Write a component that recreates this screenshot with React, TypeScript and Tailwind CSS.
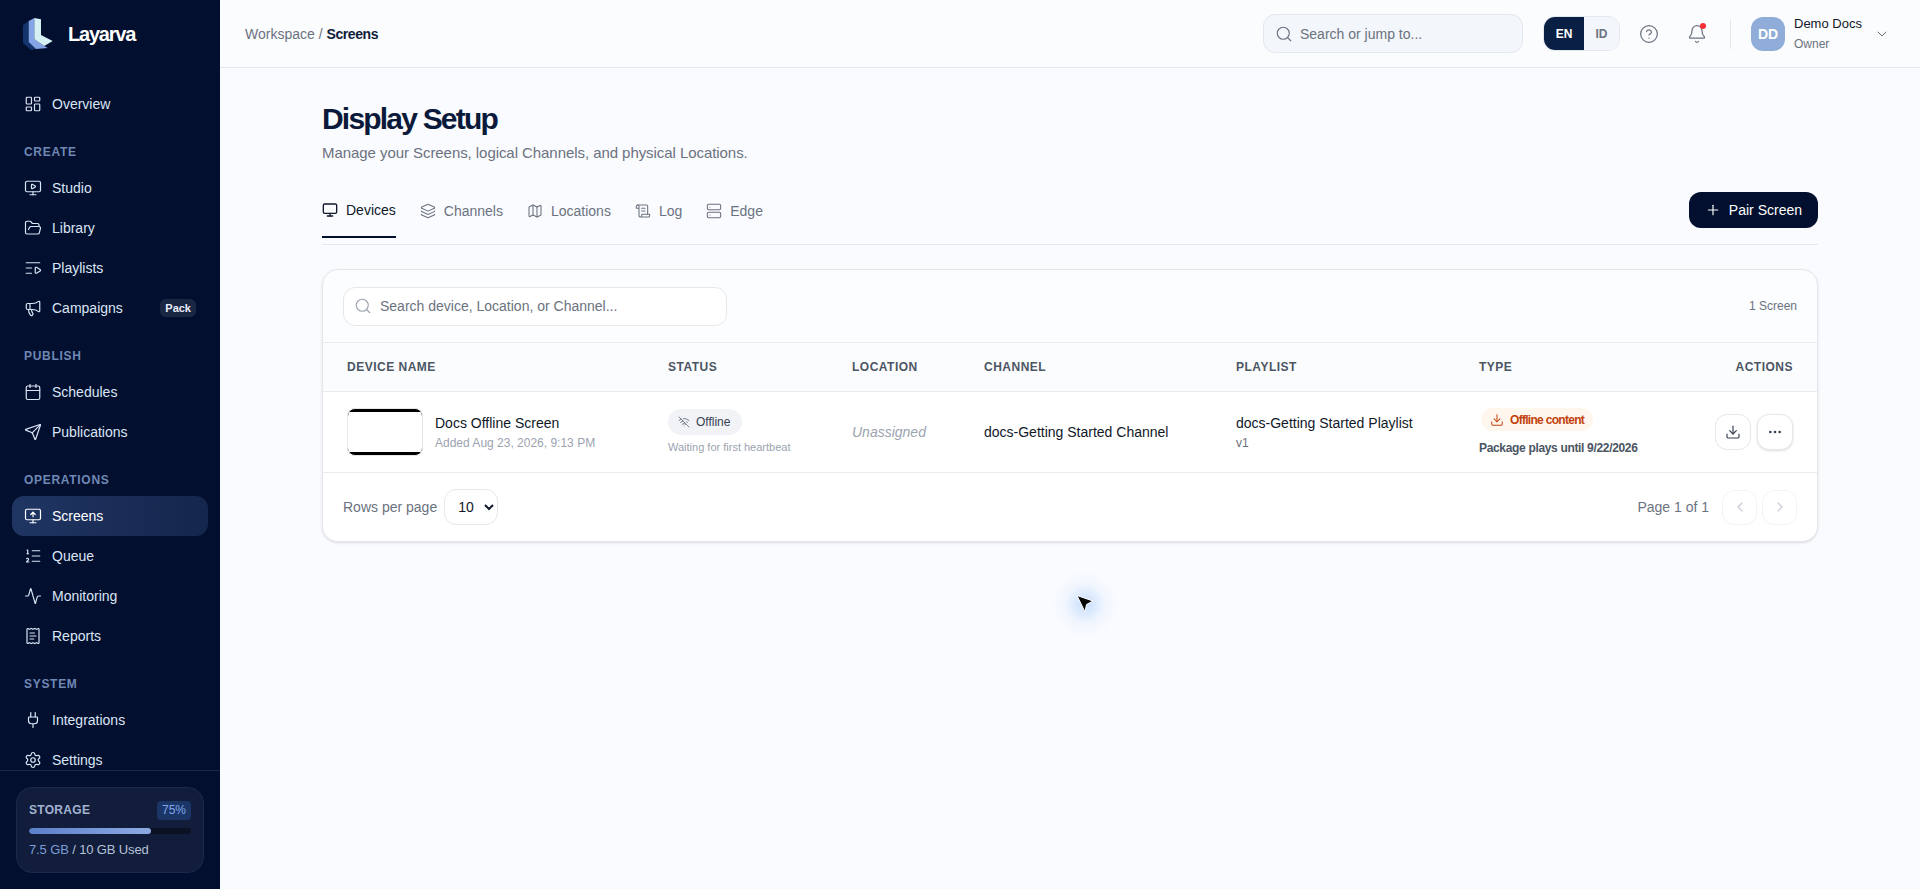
import {
  Activity,
  Bell,
  Calendar,
  ChevronDown,
  ChevronLeft,
  ChevronRight,
  CircleHelp,
  Download,
  Ellipsis,
  FolderOpen,
  Layers,
  LayoutDashboard,
  ListOrdered,
  ListVideo,
  Map,
  Megaphone,
  Monitor,
  MonitorPlay,
  MonitorUp,
  Plug,
  Plus,
  ReceiptText,
  ScrollText,
  Search,
  Send,
  Server,
  Settings,
  WifiOff,
  type LucideIcon,
} from "lucide-react";

interface NavEntry {
  label: string;
  icon: LucideIcon;
  active?: boolean;
  badge?: string;
}

const navSections: { title?: string; items: NavEntry[] }[] = [
  { items: [{ label: "Overview", icon: LayoutDashboard }] },
  {
    title: "CREATE",
    items: [
      { label: "Studio", icon: MonitorPlay },
      { label: "Library", icon: FolderOpen },
      { label: "Playlists", icon: ListVideo },
      { label: "Campaigns", icon: Megaphone, badge: "Pack" },
    ],
  },
  {
    title: "PUBLISH",
    items: [
      { label: "Schedules", icon: Calendar },
      { label: "Publications", icon: Send },
    ],
  },
  {
    title: "OPERATIONS",
    items: [
      { label: "Screens", icon: MonitorUp, active: true },
      { label: "Queue", icon: ListOrdered },
      { label: "Monitoring", icon: Activity },
      { label: "Reports", icon: ReceiptText },
    ],
  },
  {
    title: "SYSTEM",
    items: [
      { label: "Integrations", icon: Plug },
      { label: "Settings", icon: Settings },
    ],
  },
];

const tabs: { label: string; icon: LucideIcon; active?: boolean }[] = [
  { label: "Devices", icon: Monitor, active: true },
  { label: "Channels", icon: Layers },
  { label: "Locations", icon: Map },
  { label: "Log", icon: ScrollText },
  { label: "Edge", icon: Server },
];

function Logo() {
  return (
    <svg width="32" height="32" viewBox="0 0 32 32" className="shrink-0">
      <path d="M1 7 L6.7 3 L6.7 24 L14 31 L9 32 L1 25 Z" fill="#12336b" />
      <path d="M6.7 3 L12.3 0 L12.3 21.3 L22.3 28 L25.7 30 L14 31 L6.7 24 Z" fill="#86a5e6" />
      <path d="M12.3 0 L19 1.3 L19 17 L30.7 23 L22.3 28 L12.3 21.3 Z" fill="#d6f1f3" />
    </svg>
  );
}

function Sidebar() {
  return (
    <aside className="flex h-full w-[220px] shrink-0 flex-col bg-[#020f2e]">
      <div className="flex h-[68px] shrink-0 items-center gap-[14px] pb-[1px] pl-[22px]">
        <Logo />
        <span className="text-xl font-bold tracking-[-1.2px] text-white">Layarva</span>
      </div>
      <nav className="min-h-0 flex-1 overflow-hidden px-3 pt-4">
        {navSections.map((section, i) => (
          <div key={i}>
            {section.title && (
              <div className="mt-5 mb-2 pl-3 text-xs leading-4 font-bold tracking-[0.7px] text-[#7088b5]">
                {section.title}
              </div>
            )}
            {section.items.map((item) => (
              <div
                key={item.label}
                className={`flex h-10 items-center gap-[10px] rounded-xl px-3 text-sm ${
                  item.active
                    ? "bg-gradient-to-r from-[#1f3563] to-[#15264c] text-white"
                    : "text-[#dbe5f5]"
                }`}
              >
                <item.icon size={18} strokeWidth={1.6} className="shrink-0" />
                <span>{item.label}</span>
                {item.badge && (
                  <span className="ml-auto rounded-md bg-[#1b2643] px-[5px] py-[2px] text-[11px] leading-[14px] font-bold text-[#e8edf7]">
                    {item.badge}
                  </span>
                )}
              </div>
            ))}
          </div>
        ))}
      </nav>
      <div className="shrink-0 border-t border-[#1b2947] p-4">
        <div className="h-[86px] rounded-2xl border border-[#1b2a4c] bg-[#111d3b] px-3 pt-3">
          <div className="flex h-[20px] items-center justify-between">
            <span className="text-xs font-bold tracking-wide text-[#a4b3d1]">STORAGE</span>
            <span className="rounded bg-[#1b3566] px-[5px] text-xs leading-[19px] text-[#7fa8ec]">75%</span>
          </div>
          <div className="mt-2 h-[6px] overflow-hidden rounded-full bg-[#0b1122]">
            <div className="h-full w-3/4 rounded-full bg-gradient-to-r from-[#5c7fca] to-[#8eaae2]" />
          </div>
          <div className="mt-[6px] text-[13px] leading-5 tracking-[-0.13px] text-[#b5c1d9]">
            <span className="text-[#7d9cd6]">7.5 GB</span> / 10 GB Used
          </div>
        </div>
      </div>
    </aside>
  );
}

function TopBar() {
  return (
    <header className="flex h-[68px] shrink-0 items-center justify-between border-b border-[#e3e7ee] bg-[#fbfcfe] pr-[30px] pl-[25px]">
      <div className="text-sm text-[#6b7280]">
        Workspace / <span className="font-semibold tracking-[-0.4px] text-[#0f1d3a]">Screens</span>
      </div>
      <div className="flex items-center">
        <div className="flex h-[39px] w-[260px] items-center gap-[7px] rounded-xl border border-[#e2e8f0] bg-[#f3f6fa] pl-[11px] text-sm text-[#6b7280]">
          <Search size={18} strokeWidth={1.5} />
          <span>Search or jump to...</span>
        </div>
        <div className="ml-5 flex h-[35px] w-[77px] overflow-hidden rounded-xl border border-[#e2e8f0] text-xs font-bold">
          <span className="flex w-[40px] items-center justify-center bg-[#0a1f44] text-white">EN</span>
          <span className="flex flex-1 items-center justify-center bg-[#f3f6fa] text-[#6b7280]">ID</span>
        </div>
        <CircleHelp size={20} strokeWidth={1.5} className="ml-[19px] text-[#6b7280]" />
        <div className="relative ml-[28px]">
          <Bell size={20} strokeWidth={1.5} className="text-[#6b7280]" />
          <span className="absolute top-[-1px] right-[1px] h-[6px] w-[6px] rounded-full bg-red-500" />
        </div>
        <div className="mr-[20px] ml-[23px] h-[30px] w-px bg-[#e3e7ee]" />
        <div className="flex h-[34px] w-[34px] items-center justify-center rounded-xl bg-[#8fadd8] text-sm font-bold text-white">
          DD
        </div>
        <div className="ml-[9px] w-[80px]">
          <div className="text-[13px] leading-5 text-[#111827]">Demo Docs</div>
          <div className="text-xs leading-5 font-medium text-[#6b7280]">Owner</div>
        </div>
        <ChevronDown size={16} strokeWidth={1.5} className="text-[#6b7280]" />
      </div>
    </header>
  );
}

function ScreensTable() {
  return (
    <table className="w-full table-fixed border-collapse text-left">
      <thead>
        <tr className="h-[49px] border-y border-[#e8ebf0] bg-[#fbfcfe] text-xs font-bold tracking-[0.5px] text-[#4b5563]">
          <th className="w-[321px] pl-6 font-bold">DEVICE NAME</th>
          <th className="w-[184px] pl-6 font-bold">STATUS</th>
          <th className="w-[132px] pl-6 font-bold">LOCATION</th>
          <th className="w-[252px] pl-6 font-bold">CHANNEL</th>
          <th className="w-[243px] pl-6 font-bold">PLAYLIST</th>
          <th className="w-[180px] pl-6 font-bold">TYPE</th>
          <th className="pr-6 text-right font-bold">ACTIONS</th>
        </tr>
      </thead>
      <tbody>
        <tr className="h-[81px] border-b border-[#e8ebf0] bg-white">
          <td className="pl-6">
            <div className="flex items-center gap-3">
              <div className="h-12 w-[76px] shrink-0 overflow-hidden rounded-lg border border-[#e5e7eb] bg-black py-[3px]">
                <div className="h-full bg-white" />
              </div>
              <div className="pt-[2px]">
                <div className="text-sm leading-5 text-[#111827]">Docs Offline Screen</div>
                <div className="text-xs leading-5 text-[#9ca3af]">Added Aug 23, 2026, 9:13 PM</div>
              </div>
            </div>
          </td>
          <td className="pt-[2px] pl-6">
            <div className="inline-flex h-[26px] items-center gap-[6px] rounded-full bg-[#f1f3f6] pr-3 pl-[10px] text-xs text-[#374151]">
              <WifiOff size={12} strokeWidth={1.75} className="text-[#6b7280]" />
              Offline
            </div>
            <div className="mt-[2px] text-[11px] leading-[20px] font-medium text-[#9ca3af]">Waiting for first heartbeat</div>
          </td>
          <td className="pl-6 text-sm text-[#9ca3af] italic">Unassigned</td>
          <td className="pl-6 text-sm text-[#111827]">docs-Getting Started Channel</td>
          <td className="pt-[2px] pl-6">
            <div className="text-sm leading-5 text-[#111827]">docs-Getting Started Playlist</div>
            <div className="text-xs leading-5 text-[#6b7280]">v1</div>
          </td>
          <td className="pt-[2px] pl-6">
            <div className="ml-[2px] inline-flex h-[23px] items-center gap-[6px] rounded-full bg-[#fff7ed] px-[9px] text-xs font-bold tracking-[-0.7px] text-[#c2410c]">
              <Download size={14} strokeWidth={1.75} />
              Offline content
            </div>
            <div className="mt-[4px] whitespace-nowrap text-xs leading-[20px] font-semibold tracking-[-0.33px] text-[#4b5563]">Package plays until 9/22/2026</div>
          </td>
          <td className="pr-6">
            <div className="flex justify-end gap-[6px]">
              <button className="flex h-9 w-9 items-center justify-center rounded-xl border border-[#e5e7eb] bg-white text-[#374151]">
                <Download size={16} strokeWidth={1.75} />
              </button>
              <button className="flex h-9 w-9 items-center justify-center rounded-xl border border-[#e5e7eb] bg-white text-[#374151] shadow-sm">
                <Ellipsis size={16} strokeWidth={2} />
              </button>
            </div>
          </td>
        </tr>
      </tbody>
    </table>
  );
}

export default function App() {
  return (
    <div className="flex h-screen overflow-hidden bg-[#fafbfe] font-['Liberation_Sans',Arial,sans-serif]">
      <Sidebar />
      <div className="flex min-w-0 flex-1 flex-col">
        <TopBar />
        <main className="mx-auto w-[1496px] flex-1">
          <h1 className="mt-[33px] text-3xl font-bold tracking-[-1.8px] text-[#0b1a3a]">Display Setup</h1>
          <p className="mt-[6px] text-[15px] leading-5 tracking-[-0.06px] text-[#6b7280]">
            Manage your Screens, logical Channels, and physical Locations.
          </p>

          <div className="mt-[29px] flex items-start justify-between border-b border-[#e3e7ee] pb-[6px]">
            <div className="flex gap-6">
              {tabs.map((tab) => (
                <div
                  key={tab.label}
                  className={`flex h-[46px] items-start gap-2 text-sm leading-5 ${
                    tab.active
                      ? "border-b-2 border-[#020f2e] pt-2 text-[#0f172a]"
                      : "pt-[9px] text-[#6b7280]"
                  }`}
                >
                  <tab.icon size={16} strokeWidth={tab.active ? 2 : 1.6} className="mt-[2px]" />
                  <span>{tab.label}</span>
                </div>
              ))}
            </div>
            <button className="flex h-9 items-center gap-2 rounded-xl bg-[#020f2e] px-4 text-sm font-medium text-white">
              <Plus size={16} strokeWidth={1.75} />
              Pair Screen
            </button>
          </div>

          <section className="mt-[24px] overflow-hidden rounded-2xl border border-[#e5e7eb] bg-[#fcfdfe] shadow-sm">
            <div className="flex h-[72px] items-center justify-between px-5">
              <div className="flex h-[39px] w-[384px] items-center gap-2 rounded-xl border border-[#e5e7eb] bg-white pl-[10px] text-sm text-[#6b7280]">
                <Search size={18} strokeWidth={1.5} className="text-[#9ca3af]" />
                <span>Search device, Location, or Channel...</span>
              </div>
              <span className="text-xs text-[#6b7280]">1 Screen</span>
            </div>
            <ScreensTable />
            <div className="flex h-[68px] items-center justify-between bg-white px-5">
              <div className="flex items-center gap-[7px] text-sm text-[#6b7280]">
                Rows per page
                <select className="h-9 w-[54px] rounded-xl border border-[#e5e7eb] bg-white pl-[9px] text-sm text-[#111827]">
                  <option>10</option>
                </select>
              </div>
              <div className="flex items-center text-sm text-[#6b7280]">
                Page 1 of 1
                <button className="ml-[13px] flex h-[35px] w-[35px] items-center justify-center rounded-xl border border-[#f1f3f6] text-[#c5cad3]">
                  <ChevronLeft size={16} strokeWidth={1.75} />
                </button>
                <button className="ml-[5px] flex h-[35px] w-[35px] items-center justify-center rounded-xl border border-[#f1f3f6] text-[#c5cad3]">
                  <ChevronRight size={16} strokeWidth={1.75} />
                </button>
              </div>
            </div>
          </section>
        </main>
      </div>

      {/* pointer with its glow, painted over the page */}
      <div className="pointer-events-none absolute top-[569px] left-[1050px] flex h-[70px] w-[70px] items-center justify-center rounded-full bg-[radial-gradient(circle,rgba(96,165,250,0.34)_0%,rgba(147,197,253,0.09)_40%,transparent_68%)]">
        <svg width="20" height="20" viewBox="0 0 20 20">
          <path d="M2 1.5 L18 7 L11.5 10.5 L10 18 Z" fill="#050505" stroke="#ffffff" strokeWidth="1" strokeLinejoin="round" />
        </svg>
      </div>
    </div>
  );
}
